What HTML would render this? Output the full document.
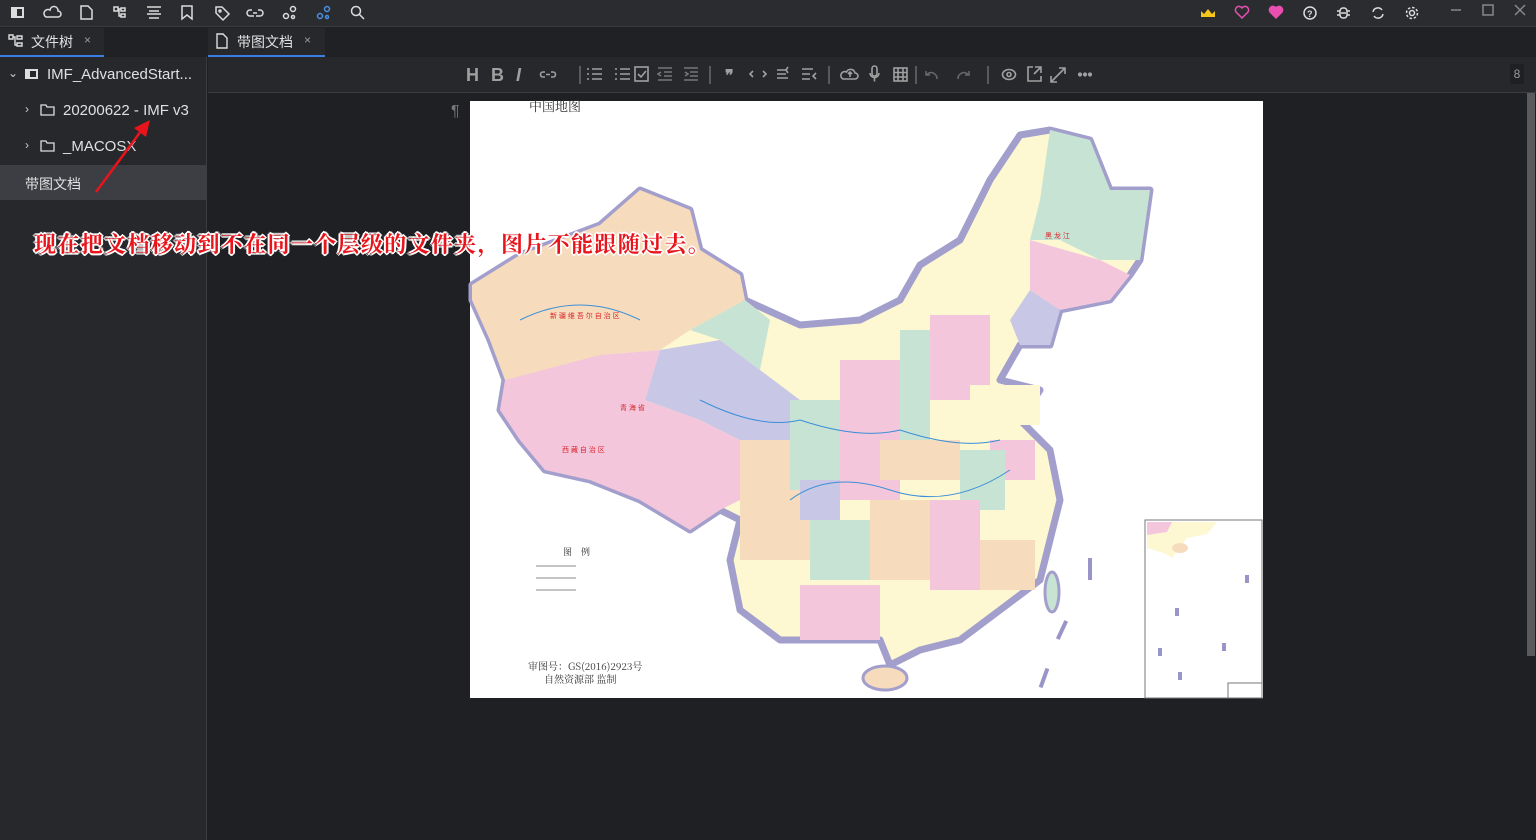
<!DOCTYPE html>
<html><head><meta charset="utf-8"><style>
*{margin:0;padding:0;box-sizing:border-box}
body{width:1536px;height:840px;overflow:hidden;background:#1f2023;font-family:"Liberation Sans","Noto Sans CJK SC",sans-serif;color:#d8d8d8;position:relative}
.abs{position:absolute}
</style></head><body>
<div class="abs" style="left:0;top:0;width:1536px;height:27px;background:#2a2c30;border-bottom:1px solid #3a3c40"></div>
<svg class="abs" style="left:0;top:0" width="1536" height="27" fill="none" stroke="#dcdcdc" stroke-width="1.5">
<rect x="11" y="7" width="13" height="11" fill="#dcdcdc" stroke="none"/><rect x="17" y="9" width="5" height="7" fill="#2a2c30" stroke="none"/>
<path d="M46 17h12a3 3 0 0 0 0-6a4 4 0 0 0-8-1a3.5 3.5 0 0 0-4 7z"/>
<path d="M81 6h7l4 4v9h-11z"/>
<path d="M114 7h4v4h-4zM121 8h4v3h-4zM121 14h4v3h-4zM118 9h3M119 9v7h2"/>
<path d="M147 7h14M149 11h10M147 14h14M149 18h10"/>
<path d="M182 6h10v13l-5-4-5 4z"/>
<path d="M216 7h6l7 7-6 6-7-7z"/><circle cx="220" cy="11" r="1"/>
<path d="M252 10h-2a3 3 0 0 0 0 6h4M258 10h2a3 3 0 0 1 0 6h-4M253 13h4"/>
<circle cx="286" cy="16" r="2.5"/><circle cx="293" cy="9" r="2.5"/><circle cx="293" cy="17" r="1.5"/>
<g stroke="#4a90e2"><circle cx="320" cy="16" r="2.5"/><circle cx="327" cy="9" r="2.5"/><circle cx="327" cy="17" r="1.5"/></g>
<circle cx="356" cy="11" r="4.5"/><path d="M359 14l5 5"/>
<path d="M1201 11l3 3 4-5 4 5 3-3v6h-14z" fill="#f5c518" stroke="none"/>
<path d="M1242 18l-6-6a3 3 0 0 1 6-4a3 3 0 0 1 6 4z" stroke="#e84fb0"/>
<path d="M1276 18l-6-6a3 3 0 0 1 6-4a3 3 0 0 1 6 4z" fill="#e84fb0" stroke="#e84fb0"/>
<circle cx="1310" cy="13" r="6"/><text x="1307" y="17" font-size="9" fill="#dcdcdc" stroke="none" font-weight="bold">?</text>
<rect x="1340" y="8" width="7" height="10" rx="3"/><path d="M1337 11h3M1347 11h3M1337 15h3M1347 15h3M1341 13h5"/>
<path d="M1373 12a5 5 0 0 1 9-2M1383 14a5 5 0 0 1-9 2"/>
<circle cx="1412" cy="13" r="2.5"/><circle cx="1412" cy="13" r="5.5" stroke-dasharray="2.5 1.8"/>
<path d="M1451 10h10" stroke="#888"/><rect x="1483" y="5" width="10" height="10" stroke="#888"/><path d="M1515 5l10 10M1525 5l-10 10" stroke="#888"/>
</svg>
<div class="abs" style="left:0;top:28px;width:207px;height:812px;background:#26282c;border-right:1px solid #3a3c40"></div>
<div class="abs" style="left:0;top:28px;width:207px;height:29px;background:#202124"></div>
<div class="abs" style="left:0;top:28px;width:104px;height:29px;background:#26282c;border-bottom:2px solid #3a7ee0"></div>
<svg class="abs" style="top:34px;left:8px" width="16" height="14" fill="none" stroke="#ddd" stroke-width="1.4"><path d="M1 1h4v4h-4zM9 2h5v3h-5zM9 9h5v3h-5zM5 3h2v8h2"/></svg>
<div class="abs" style="left:31px;top:32px;font-size:14px;color:#e0e0e0">文件树</div>
<div class="abs" style="left:84px;top:33px;font-size:12px;color:#999">×</div>
<div class="abs" style="left:8px;top:66px;font-size:12px;color:#ccc">⌄</div>
<svg class="abs" style="left:25px;top:69px" width="14" height="11"><rect x="0" y="0" width="13" height="10" fill="#ddd"/><rect x="5" y="2" width="6" height="6" fill="#26282c"/></svg>
<div class="abs" style="left:47px;top:66px;font-size:15px;color:#e0e0e0">IMF_AdvancedStart...</div>
<div class="abs" style="left:25px;top:102px;font-size:12px;color:#ccc">›</div>
<svg class="abs" style="left:40px;top:104px" width="15" height="12" fill="none" stroke="#ddd" stroke-width="1.3"><path d="M1 1h5l1 2h7v8h-13z"/></svg>
<div class="abs" style="left:63px;top:102px;font-size:15px;color:#e0e0e0">20200622 - IMF v3</div>
<div class="abs" style="left:25px;top:138px;font-size:12px;color:#ccc">›</div>
<svg class="abs" style="left:40px;top:140px" width="15" height="12" fill="none" stroke="#ddd" stroke-width="1.3"><path d="M1 1h5l1 2h7v8h-13z"/></svg>
<div class="abs" style="left:63px;top:138px;font-size:15px;color:#e0e0e0">_MACOSX</div>
<div class="abs" style="left:0;top:165px;width:207px;height:35px;background:#3c3e43"></div>
<div class="abs" style="left:25px;top:174px;font-size:14px;color:#e0e0e0">带图文档</div>
<div class="abs" style="left:208px;top:28px;width:1328px;height:29px;background:#202124"></div>
<div class="abs" style="left:208px;top:28px;width:117px;height:29px;background:#26282c;border-bottom:2px solid #3a7ee0"></div>
<svg class="abs" style="left:216px;top:33px" width="12" height="16" fill="none" stroke="#ddd" stroke-width="1.4"><path d="M1 1h6l4 4v10h-10z"/></svg>
<div class="abs" style="left:237px;top:32px;font-size:14px;color:#e0e0e0">带图文档</div>
<div class="abs" style="left:304px;top:33px;font-size:12px;color:#999">×</div>
<div class="abs" style="left:208px;top:57px;width:1328px;height:36px;background:#26282c;border-bottom:1px solid #3a3c40"></div>
<svg class="abs" style="left:440px;top:55px" width="680" height="40" fill="none" stroke="#a0a0a0" stroke-width="1.6">
<text x="26" y="26" font-size="18" font-weight="bold" fill="#a0a0a0" stroke="none">H</text>
<text x="51" y="26" font-size="18" font-weight="bold" fill="#a0a0a0" stroke="none">B</text>
<text x="76" y="26" font-size="18" font-weight="bold" font-style="italic" fill="#a0a0a0" stroke="none">I</text>
<path d="M105 17h-2a2.5 2.5 0 0 0 0 5h2M111 17h2a2.5 2.5 0 0 1 0 5h-2M106 19.5h4"/>
<path d="M140 11v18" stroke="#666"/>
<path d="M147 14h2M152 14h10M147 19h2M152 19h10M147 24h2M152 24h10"/>
<path d="M175 14h2M180 14h10M175 19h2M180 19h10M175 24h2M180 24h10"/>
<rect x="195" y="12" width="13" height="14"/><path d="M198 19l3 3 5-6"/>
<path d="M218 13h14M224 17h8M224 21h8M218 25h14M221 17l-3 2 3 2" stroke="#777"/>
<path d="M244 13h14M250 17h8M250 21h8M244 25h14M245 17l3 2-3 2" stroke="#777"/>
<path d="M270 11v18" stroke="#666"/>
<text x="285" y="26" font-size="16" font-weight="bold" fill="#a0a0a0" stroke="none">❞</text>
<path d="M313 16l-3 3 3 3M323 16l3 3-3 3"/>
<path d="M337 15h9M337 19h9M337 23h11M348 12l-2 3 2 3"/>
<path d="M362 14h11M362 19h8M362 24h8M376 18l-3 3 3 3"/>
<path d="M389 11v18" stroke="#666"/>
<path d="M403 24h12a3 3 0 0 0 0-6a4.5 4.5 0 0 0-8.5-1a3.5 3.5 0 0 0-3.5 7zM410 22v-5M408 19l2-2 2 2"/>
<rect x="432" y="11" width="5" height="10" rx="2.5"/><path d="M430 18a4.5 4.5 0 0 0 9 0M434.5 22.5v4"/>
<rect x="454" y="13" width="13" height="13"/><path d="M458 13v13M463 13v13M454 17.5h13M454 22h13"/>
<path d="M476 11v18" stroke="#666"/>
<path d="M497 24a6 6 0 0 0-8-6l-3 2M486 16v4h4" stroke="#666"/>
<path d="M518 24a6 6 0 0 1 8-6l3 2M529 16v4h-4" stroke="#666"/>
<path d="M548 11v18" stroke="#666"/>
<ellipse cx="569" cy="19.5" rx="6.5" ry="5"/><circle cx="569" cy="19.5" r="2"/>
<path d="M593 12h-5v14h13v-5M595 12h6v6M601 12l-7 7"/>
<path d="M611 27l14-14M611 21v6h6M625 19v-6h-6"/>
<circle cx="640" cy="19.5" r="1.3" fill="#a0a0a0"/><circle cx="645" cy="19.5" r="1.3" fill="#a0a0a0"/><circle cx="650" cy="19.5" r="1.3" fill="#a0a0a0"/>
</svg>
<div class="abs" style="left:1510px;top:64px;width:14px;height:20px;background:#1f2023;font-size:12px;color:#999;text-align:center;line-height:20px;border-radius:2px">8</div>
<div class="abs" style="left:1527px;top:93px;width:8px;height:563px;background:#5a5a5d"></div>
<div class="abs" style="left:451px;top:103px;font-size:16px;color:#777">¶</div>
<svg class="abs" style="left:0;top:0" width="1536" height="840">
<rect x="470" y="101" width="793" height="597" fill="#fff"/>
<text x="529" y="111" font-size="13" fill="#333" font-family="Noto Serif CJK SC,serif">中国地图</text>
<g stroke="#a39fcc" stroke-width="7" stroke-linejoin="round">
<path d="M472 285L520 255 600 225 640 190 690 210 700 250 740 275 745 300 800 325 860 320 900 300 920 265 960 240 990 180 1020 135 1050 130 1090 140 1110 190 1150 190 1140 260 1130 275 1110 300 1060 310 1050 345 1020 345 1000 380 1040 390 1020 420 1050 450 1060 500 1050 540 1040 580 1000 610 960 640 920 650 890 665 880 640 820 640 780 640 740 610 730 560 740 520 720 510 690 530 640 500 590 480 545 470 520 440 500 410 505 380 490 340 472 300Z" fill="#fdf8d2"/>
</g>
<path d="M472 285L520 255 600 225 640 190 690 210 700 250 740 275 745 300 690 330 660 350 600 355 540 375 505 380 490 340 472 300Z" fill="#f6dbbd"/>
<path d="M505 380L600 355 660 350 645 400 700 420 740 440 740 500 720 510 690 530 640 500 590 480 545 470 520 440 500 410Z" fill="#f3c6dc"/>
<path d="M660 350L720 340 760 370 800 400 790 440 740 440 700 420 645 400Z" fill="#c8c7e6"/>
<path d="M690 330L745 300 770 320 760 370 720 340Z" fill="#c7e3d3"/>
<path d="M1050 130L1090 140 1110 190 1150 190 1140 260 1100 260 1060 240 1030 240 1040 200Z" fill="#c7e3d3"/>
<path d="M1030 240L1100 260 1130 275 1110 300 1060 310 1030 290Z" fill="#f3c6dc"/>
<path d="M1030 290L1060 310 1050 345 1020 345 1010 320Z" fill="#c8c7e6"/>
<rect x="740" y="440" width="80" height="120" fill="#f6dbbd"/>
<rect x="790" y="400" width="50" height="90" fill="#c7e3d3"/>
<rect x="840" y="360" width="60" height="140" fill="#f3c6dc"/>
<rect x="900" y="330" width="30" height="110" fill="#c7e3d3"/>
<rect x="930" y="315" width="60" height="85" fill="#f3c6dc"/>
<rect x="970" y="385" width="70" height="40" fill="#fdf8d2"/>
<rect x="880" y="440" width="80" height="40" fill="#f6dbbd"/>
<rect x="990" y="440" width="45" height="40" fill="#f3c6dc"/>
<rect x="960" y="450" width="45" height="60" fill="#c7e3d3"/>
<rect x="810" y="520" width="60" height="60" fill="#c7e3d3"/>
<rect x="870" y="500" width="60" height="80" fill="#f6dbbd"/>
<rect x="930" y="500" width="50" height="90" fill="#f3c6dc"/>
<rect x="980" y="540" width="55" height="50" fill="#f6dbbd"/>
<rect x="800" y="585" width="80" height="55" fill="#f3c6dc"/>
<rect x="800" y="480" width="40" height="40" fill="#c8c7e6"/>
<ellipse cx="885" cy="678" rx="22" ry="12" fill="#f6dbbd" stroke="#a39fcc" stroke-width="3"/>
<ellipse cx="1052" cy="592" rx="7" ry="20" fill="#c7e3d3" stroke="#a39fcc" stroke-width="3"/>
<g fill="none" stroke="#3b8fd8" stroke-width="1"><path d="M520 320q60-30 120 0M700 400q60 30 100 20 60 20 100 10 60 20 100 10M790 500q40-30 100-10 60 20 120-20"/></g>
<g fill="#d9252b" font-size="7"><text x="550" y="318">新 疆 维 吾 尔 自 治 区</text><text x="562" y="452">西 藏 自 治 区</text><text x="620" y="410">青 海 省</text><text x="1045" y="238">黑 龙 江</text></g>
<g fill="#9a95c8"><rect x="1060" y="620" width="4" height="20" transform="rotate(25 1062 630)"/><rect x="1042" y="668" width="4" height="20" transform="rotate(20 1044 678)"/><rect x="1088" y="558" width="4" height="22"/></g>
<rect x="1145" y="520" width="117" height="178" fill="#fff" stroke="#777"/>
<path d="M1147 522h70l-10 12-20 4-15 20-8-5-17-5z" fill="#fdf8d2"/>
<path d="M1147 522h25l-5 10-20 3z" fill="#f3c6dc"/>
<ellipse cx="1180" cy="548" rx="8" ry="5" fill="#f6dbbd"/>
<g fill="#9a95c8"><rect x="1175" y="608" width="4" height="8"/><rect x="1245" y="575" width="4" height="8"/><rect x="1158" y="648" width="4" height="8"/><rect x="1222" y="643" width="4" height="8"/><rect x="1178" y="672" width="4" height="8"/></g>
<rect x="1228" y="683" width="34" height="15" fill="#fff" stroke="#777"/>
<g font-size="9" fill="#333" font-family="Noto Serif CJK SC,serif"><text x="563" y="555">图　例</text><text x="528" y="670" font-size="10">审图号：GS(2016)2923号</text><text x="544" y="683" font-size="10">自然资源部 监制</text></g>
<path d="M536 566h40M536 578h40M536 590h40" stroke="#888"/>
<path d="M96 192L141 131" stroke="#e8141b" stroke-width="2.5"/>
<path d="M150 120L134 128 146 137Z" fill="#e8141b"/>
</svg>
<div class="abs" style="left:34px;top:228px;font-size:22px;letter-spacing:1.35px;color:#e8141b;font-family:'Liberation Serif','Noto Serif CJK SC',serif;font-weight:bold;white-space:nowrap;text-shadow:-1px -1px 0 #fff,1px -1px 0 #fff,-1px 1px 0 #fff,1px 1px 0 #fff,0 2px 0 #fff,2px 0 0 #fff,0 -2px 0 #fff,-2px 0 0 #fff">现在把文档移动到不在同一个层级的文件夹，图片不能跟随过去。</div>
</body></html>
